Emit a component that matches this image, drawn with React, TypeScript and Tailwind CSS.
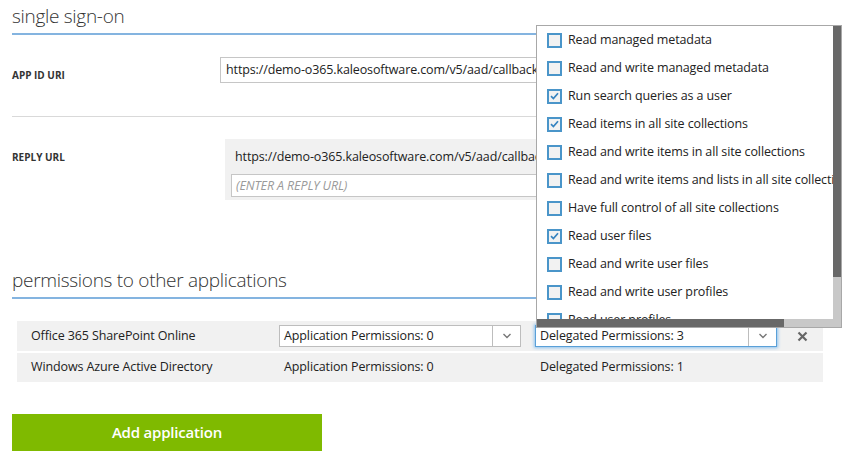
const PERMS: { label: string; on: boolean }[] = [
  { label: 'Read managed metadata', on: false },
  { label: 'Read and write managed metadata', on: false },
  { label: 'Run search queries as a user', on: true },
  { label: 'Read items in all site collections', on: true },
  { label: 'Read and write items in all site collections', on: false },
  { label: 'Read and write items and lists in all site collections', on: false },
  { label: 'Have full control of all site collections', on: false },
  { label: 'Read user files', on: true },
  { label: 'Read and write user files', on: false },
  { label: 'Read and write user profiles', on: false },
  { label: 'Read user profiles', on: false },
]

function Chevron() {
  return (
    <svg width="10" height="6" viewBox="0 0 10 6" className="text-[#777]">
      <path d="M1.5 1l3.5 3.5L8.5 1" fill="none" stroke="currentColor" strokeWidth="1.4" />
    </svg>
  )
}

function Select({ value, focused }: { value: string; focused?: boolean }) {
  return (
    <div
      className={`flex h-[22px] w-[242px] items-stretch bg-white border ${
        focused ? 'border-[#5aa0d8] shadow-[0_0_3px_1px_#8ec3ee]' : 'border-[#bdbdbd]'
      }`}
    >
      <div className="flex-1 pl-[4px] leading-[20px] whitespace-nowrap overflow-hidden">{value}</div>
      <div className="w-[28px] flex items-center justify-center border-l border-[#bdbdbd]">
        <Chevron />
      </div>
    </div>
  )
}

export default function App() {
  return (
    <div className="relative w-[868px] h-[470px] overflow-hidden bg-white text-[12.5px] tracking-[-0.12px] text-[#222] font-['Segoe_UI','Open_Sans',sans-serif]">
      <div className="pl-3 w-[824px]">
        {/* single sign-on */}
        <div className="h-[33px] pt-[3px] text-[19px] tracking-[-0.3px] font-light leading-[26px] text-[#333]">
          single sign-on
        </div>
        <div className="h-[2px] bg-[#84b4e0]" />

        <div className="flex h-[81px]">
          <div className="w-[208px] pt-[34px] text-[10px] tracking-normal font-bold leading-[12px] text-[#333]">APP ID URI</div>
          <div className="pt-[22px]">
            <div className="h-[26px] w-[480px] border border-[#c6c6c6] pl-[5px] leading-[24px] whitespace-nowrap overflow-hidden">
              https://demo-o365.kaleosoftware.com/v5/aad/callback
            </div>
          </div>
        </div>
        <div className="h-px bg-[#d9d9d9]" />

        <div className="flex h-[147px]">
          <div className="w-[213px] pt-[34px] text-[10px] tracking-normal font-bold leading-[12px] text-[#333]">REPLY URL</div>
          <div className="pt-[22px]">
            <div className="w-[480px] bg-[#f1f1f1] px-[6px] pb-[3px]">
              <div className="h-[35px] pl-[4px] leading-[35px] whitespace-nowrap overflow-hidden">
                https://demo-o365.kaleosoftware.com/v5/aad/callback
              </div>
              <div className="h-[23px] border border-[#c6c6c6] bg-white pl-[4px] leading-[21px] italic text-[#9a9a9a]">
                (ENTER A REPLY URL)
              </div>
            </div>
          </div>
        </div>

        {/* permissions */}
        <div className="h-[33px] pt-[3px] text-[19px] tracking-[-0.3px] font-light leading-[26px] text-[#333]">
          permissions to other applications
        </div>
        <div className="h-[2px] bg-[#84b4e0]" />

        <div className="ml-[5px] mt-[22px] w-[806px] flex flex-col gap-[2px]">
          <div className="flex h-[30px] items-center bg-[#f1f1f1]">
            <div className="w-[262px] pl-[14px]">Office 365 SharePoint Online</div>
            <div className="w-[256px]">
              <Select value="Application Permissions: 0" />
            </div>
            <div className="w-[262px]">
              <Select value="Delegated Permissions: 3" focused />
            </div>
            <div className="flex items-center">
              <svg width="11" height="11" viewBox="0 0 11 11">
                <path d="M1.5 1.5l8 8M9.5 1.5l-8 8" stroke="#666" strokeWidth="2.2" />
              </svg>
            </div>
          </div>
          <div className="flex h-[29px] items-center bg-[#f1f1f1]">
            <div className="w-[262px] pl-[14px]">Windows Azure Active Directory</div>
            <div className="w-[256px] pl-[5px]">Application Permissions: 0</div>
            <div className="pl-[5px]">Delegated Permissions: 1</div>
          </div>
        </div>

        <button className="mt-[32px] h-[37px] w-[310px] bg-[#7fba00] text-white text-[15px] tracking-[-0.2px] font-semibold">
          Add application
        </button>
      </div>

      {/* delegated permissions dropdown */}
      <div className="absolute left-[536px] top-[25px] w-[306px] h-[303px] border border-[#a8a8a8] bg-white flex flex-col">
        <div className="flex flex-1 min-h-0">
          <div className="flex-1 overflow-hidden">
            {PERMS.map((p) => (
              <div key={p.label} className="flex h-[28px] items-center pl-[10px] whitespace-nowrap">
                <div className="w-[15px] h-[15px] border-2 border-[#4a95c9] bg-[#f2f2f2] flex items-center justify-center shrink-0">
                  {p.on && (
                    <svg width="9" height="8" viewBox="0 0 9 8">
                      <path d="M1 4.2l2.4 2.4L8 1.2" fill="none" stroke="#3583c0" strokeWidth="1.7" />
                    </svg>
                  )}
                </div>
                <span className="ml-[6px]">{p.label}</span>
              </div>
            ))}
          </div>
          <div className="w-[8px] flex flex-col bg-[#c8c8c8]">
            <div className="h-[251px] bg-[#686868]" />
          </div>
        </div>
        <div className="flex h-[8px]">
          <div className="w-[247px] bg-[#686868]" />
          <div className="flex-1 bg-[#c8c8c8]" />
        </div>
      </div>
    </div>
  )
}
